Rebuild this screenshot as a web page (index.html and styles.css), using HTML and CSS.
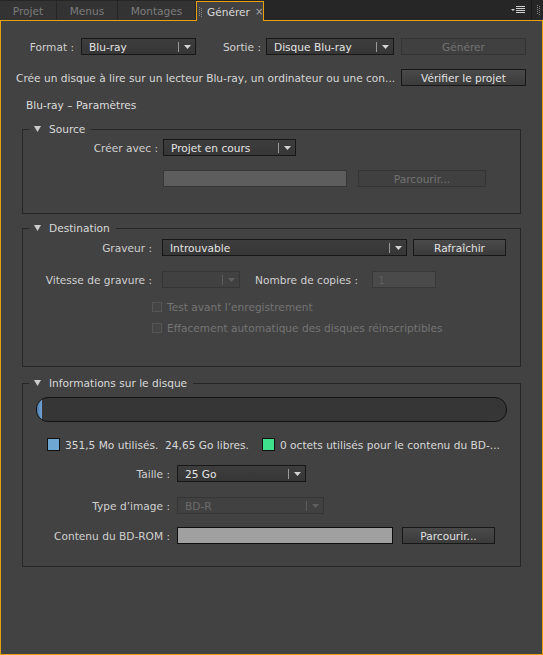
FILE: index.html
```html
<!DOCTYPE html>
<html lang="fr">
<head>
<meta charset="utf-8">
<title>Générer</title>
<link rel="stylesheet" href="styles.css">
</head>
<body>
<div class="tabbar">
  <div class="tab tab-projet">Projet</div>
  <div class="tab tab-menus">Menus</div>
  <div class="tab tab-montages">Montages</div>
  <div class="tab tab-active">
    <svg class="grip" width="3" height="10" viewBox="0 0 3 10"><rect x="0" y="0" width="1" height="1"/><rect x="0" y="2" width="1" height="1"/><rect x="0" y="4" width="1" height="1"/><rect x="0" y="6" width="1" height="1"/><rect x="0" y="8" width="1" height="1"/><rect x="2" y="1" width="1" height="1"/><rect x="2" y="3" width="1" height="1"/><rect x="2" y="5" width="1" height="1"/><rect x="2" y="7" width="1" height="1"/><rect x="2" y="9" width="1" height="1"/></svg>
    <span class="tab-label">Générer</span>
    <span class="tab-close">×</span>
  </div>
  <div class="tab-spacer"></div>
  <svg class="menu-icon" width="14" height="8" viewBox="0 0 14 8"><polygon points="0,3 4,3 2,5"/><rect x="5" y="0" width="9" height="1"/><rect x="5" y="2" width="9" height="1"/><rect x="5" y="4" width="9" height="1"/><rect x="5" y="6" width="9" height="1"/></svg>
  <div class="tab-end">
    <svg class="grip grip-end" width="3" height="10" viewBox="0 0 3 10"><rect x="0" y="0" width="1" height="1"/><rect x="0" y="2" width="1" height="1"/><rect x="0" y="4" width="1" height="1"/><rect x="0" y="6" width="1" height="1"/><rect x="0" y="8" width="1" height="1"/><rect x="2" y="1" width="1" height="1"/><rect x="2" y="3" width="1" height="1"/><rect x="2" y="5" width="1" height="1"/><rect x="2" y="7" width="1" height="1"/><rect x="2" y="9" width="1" height="1"/></svg>
  </div>
</div>

<div class="panel">
  <div class="row row-top">
    <span class="lbl lbl-format">Format :</span>
    <div class="select sel-format"><span class="sel-text">Blu-ray</span><span class="sel-sep"></span><svg class="sel-arrow" width="7" height="4" viewBox="0 0 7 4"><polygon points="0,0 7,0 3.5,4"/></svg></div>
    <span class="lbl lbl-sortie">Sortie :</span>
    <div class="select sel-sortie"><span class="sel-text">Disque Blu-ray</span><span class="sel-sep"></span><svg class="sel-arrow" width="7" height="4" viewBox="0 0 7 4"><polygon points="0,0 7,0 3.5,4"/></svg></div>
    <div class="btn btn-disabled btn-generer">Générer</div>
  </div>

  <div class="row row-desc">
    <span class="desc">Crée un disque à lire sur un lecteur Blu-ray, un ordinateur ou une con...</span>
    <div class="btn btn-verifier">Vérifier le projet</div>
  </div>

  <div class="params-title">Blu-ray – Paramètres</div>

  <section class="group group-source">
    <div class="group-title"><svg class="tri" width="7" height="6" viewBox="0 0 7 6"><polygon points="0,0 7,0 3.5,6"/></svg><span>Source</span></div>
    <div class="row src-row1">
      <span class="lbl lbl-src">Créer avec :</span>
      <div class="select sel-src"><span class="sel-text">Projet en cours</span><span class="sel-sep"></span><svg class="sel-arrow" width="7" height="4" viewBox="0 0 7 4"><polygon points="0,0 7,0 3.5,4"/></svg></div>
    </div>
    <div class="row src-row2">
      <div class="input input-disabled input-src"></div>
      <div class="btn btn-disabled btn-src-browse">Parcourir...</div>
    </div>
  </section>

  <section class="group group-dest">
    <div class="group-title"><svg class="tri" width="7" height="6" viewBox="0 0 7 6"><polygon points="0,0 7,0 3.5,6"/></svg><span>Destination</span></div>
    <div class="row dest-row1">
      <span class="lbl lbl-dest">Graveur :</span>
      <div class="select sel-graveur"><span class="sel-text">Introuvable</span><span class="sel-sep"></span><svg class="sel-arrow" width="7" height="4" viewBox="0 0 7 4"><polygon points="0,0 7,0 3.5,4"/></svg></div>
      <div class="btn btn-refresh">Rafraîchir</div>
    </div>
    <div class="row dest-row2">
      <span class="lbl lbl-dest">Vitesse de gravure :</span>
      <div class="select select-disabled sel-vitesse"><span class="sel-text"></span><span class="sel-sep"></span><svg class="sel-arrow" width="7" height="4" viewBox="0 0 7 4"><polygon points="0,0 7,0 3.5,4"/></svg></div>
      <span class="lbl lbl-copies">Nombre de copies :</span>
      <div class="input input-number">1</div>
    </div>
    <div class="cb-row cb-row1"><span class="checkbox"></span><span>Test avant l’enregistrement</span></div>
    <div class="cb-row cb-row2"><span class="checkbox"></span><span>Effacement automatique des disques réinscriptibles</span></div>
  </section>

  <section class="group group-info">
    <div class="group-title"><svg class="tri" width="7" height="6" viewBox="0 0 7 6"><polygon points="0,0 7,0 3.5,6"/></svg><span>Informations sur le disque</span></div>
    <div class="progress"><div class="progress-fill" style="width:5px"></div></div>
    <div class="legend">
      <span class="swatch swatch-used"></span>
      <span class="legend-text legend-text1">351,5 Mo utilisés.  24,65 Go libres.</span>
      <span class="swatch swatch-rom"></span>
      <span class="legend-text legend-text2">0 octets utilisés pour le contenu du BD-...</span>
    </div>
    <div class="row info-row info-row1">
      <span class="lbl lbl-info">Taille :</span>
      <div class="select sel-taille"><span class="sel-text">25 Go</span><span class="sel-sep"></span><svg class="sel-arrow" width="7" height="4" viewBox="0 0 7 4"><polygon points="0,0 7,0 3.5,4"/></svg></div>
    </div>
    <div class="row info-row info-row2">
      <span class="lbl lbl-info">Type d’image :</span>
      <div class="select select-disabled sel-type"><span class="sel-text">BD-R</span><span class="sel-sep"></span><svg class="sel-arrow" width="7" height="4" viewBox="0 0 7 4"><polygon points="0,0 7,0 3.5,4"/></svg></div>
    </div>
    <div class="row info-row info-row3">
      <span class="lbl lbl-info">Contenu du BD-ROM :</span>
      <div class="input input-rom"></div>
      <div class="btn btn-rom-browse">Parcourir...</div>
    </div>
  </section>
</div>
</body>
</html>
```

FILE: styles.css
```css
* { box-sizing: border-box; }

html, body { margin: 0; padding: 0; }

body {
  width: 543px;
  height: 655px;
  overflow: hidden;
  background: #272727;
  font-family: "DejaVu Sans", "Noto Sans", sans-serif;
  font-size: 10.6px;
  color: #d0d0d0;
}

/* ---------- tab bar ---------- */
.tabbar {
  display: flex;
  height: 20px;
  padding-top: 1px;
  background: #262626;
}

.tab {
  height: 19px;
  display: flex;
  align-items: center;
  justify-content: center;
  margin-right: 1px;
  background: #333333;
  color: #7c7c7c;
  flex: none;
}

.tab-projet { width: 56px; }
.tab-menus { width: 60px; }
.tab-montages { width: 77px; }

.tab-active {
  width: 68px;
  height: 20px;
  margin-bottom: -1px;
  position: relative;
  z-index: 1;
  justify-content: flex-start;
  padding-left: 2px;
  background: #424242;
  color: #dadada;
  border: 1px solid #e7a10c;
  border-bottom: none;
}

.grip { fill: #8a8a8a; flex: none; }

.tab-label { margin-left: 5px; }

.tab-close {
  margin-left: 5px;
  color: #a8a8a8;
  font-size: 10px;
}

.tab-spacer { flex: 1; }

.menu-icon {
  align-self: center;
  fill: #cfcfcf;
  margin-right: 6px;
  margin-top: -1px;
}

.tab-end {
  width: 12px;
  display: flex;
  align-items: center;
  padding-left: 5px;
  border-left: 1px solid #1a1a1a;
  margin-top: -1px;
}

/* ---------- panel ---------- */
.panel {
  height: 635px;
  background: #424242;
  border: 1px solid #e7a10c;
}

.row {
  display: flex;
  align-items: center;
  height: 17px;
}

.lbl {
  flex: none;
  white-space: nowrap;
  text-align: right;
  color: #d0d0d0;
}

/* select */
.select {
  flex: none;
  height: 17px;
  display: flex;
  align-items: center;
  padding: 0 4px 0 7px;
  border: 1px solid #171717;
  background: linear-gradient(#3d3d3d, #363636);
  color: #e4e4e4;
}

.sel-text {
  flex: 1;
  white-space: nowrap;
  overflow: hidden;
}

.sel-sep {
  width: 1px;
  height: 10px;
  background: #9a9a9a;
  margin-right: 5px;
}

.sel-arrow { fill: #d4d4d4; flex: none; }

.select-disabled {
  border-color: #363636;
  background: #414141;
  color: #6c6c6c;
}

.select-disabled .sel-sep { background: #5c5c5c; }
.select-disabled .sel-arrow { fill: #5f5f5f; }

/* buttons */
.btn {
  flex: none;
  height: 17px;
  display: flex;
  align-items: center;
  justify-content: center;
  border: 1px solid #181818;
  background: linear-gradient(#4a4a4a, #3b3b3b);
  color: #e2e2e2;
  white-space: nowrap;
}

.btn-disabled {
  border-color: #343434;
  background: #404040;
  color: #737373;
}

/* inputs */
.input {
  flex: none;
  height: 17px;
}

.input-disabled {
  background: #5d5d5d;
  border: 1px solid #373737;
}

.input-number {
  display: flex;
  align-items: center;
  padding-left: 5px;
  background: #4a4a4a;
  border: 1px solid #383838;
  color: #5e5e5e;
}

.input-rom {
  background: #a0a0a0;
  border: 1px solid #0f0f0f;
}

/* top rows */
.row-top { margin-top: 17px; }
.lbl-format { width: 73px; margin-right: 7px; }
.sel-format { width: 115px; }
.lbl-sortie { width: 65px; margin-right: 5px; }
.sel-sortie { width: 128px; }
.btn-generer { width: 125px; margin-left: 7px; }

.row-desc { margin-top: 14px; }
.desc {
  width: 385px;
  margin-left: 15px;
  white-space: nowrap;
  overflow: hidden;
  color: #d8d8d8;
}
.btn-verifier { width: 125px; }

.params-title {
  margin-top: 12px;
  margin-left: 25px;
  line-height: 14px;
  height: 14px;
  color: #dedede;
}

/* ---------- groups ---------- */
.group {
  margin: 0 21px;
  border: 1px solid #262626;
}

.group-title {
  display: flex;
  align-items: center;
  width: max-content;
  height: 14px;
  line-height: 14px;
  margin: -8px 0 0 6px;
  padding: 0 6px 0 5px;
  background: #424242;
  color: #dadada;
}

.tri { fill: #cccccc; margin-right: 8px; flex: none; }

.group-source { margin-top: 17px; padding-bottom: 26px; }
.src-row1 { margin-top: 3px; }
.lbl-src { width: 135px; margin-right: 5px; }
.sel-src { width: 133px; }
.src-row2 { margin-top: 14px; padding-left: 140px; }
.input-src { width: 184px; }
.btn-src-browse { width: 128px; margin-left: 11px; }

.group-dest { margin-top: 14px; padding-bottom: 31px; }
.dest-row1 { margin-top: 4px; }
.lbl-dest { width: 129px; margin-right: 10px; }
.sel-graveur { width: 245px; }
.btn-refresh { width: 93px; margin-left: 6px; }
.dest-row2 { margin-top: 15px; }
.sel-vitesse { width: 78px; }
.lbl-copies { width: 118px; margin-right: 14px; }
.input-number { width: 64px; }

.cb-row {
  display: flex;
  align-items: center;
  height: 14px;
  padding-left: 129px;
  color: #747474;
  white-space: nowrap;
}
.cb-row1 { margin-top: 12px; }
.cb-row2 { margin-top: 7px; }

.checkbox {
  width: 10px;
  height: 10px;
  margin-right: 5px;
  border: 1px solid #555555;
  background: #454545;
  flex: none;
}

.group-info { margin-top: 16px; padding-bottom: 22px; }

.progress {
  width: 471px;
  height: 25px;
  margin: 7px 0 0 13px;
  border: 1px solid #111111;
  border-radius: 12px;
  background: #363636;
  overflow: hidden;
}

.progress-fill {
  height: 100%;
  background: linear-gradient(to right, #4d7fae, #72a5d3);
}

.legend {
  display: flex;
  align-items: center;
  height: 13px;
  margin-top: 16px;
  padding-left: 24px;
  white-space: pre;
  color: #d8d8d8;
}

.swatch {
  width: 13px;
  height: 13px;
  flex: none;
  border: 1px solid #111111;
  margin-right: 5px;
}
.swatch-used { background: #6fa7d3; }
.swatch-rom { background: #3fe28c; }

.legend-text { overflow: hidden; }
.legend-text1 { width: 197px; }
.legend-text2 { width: 226px; }

.info-row1 { margin-top: 14px; }
.info-row2 { margin-top: 15px; }
.info-row3 { margin-top: 13px; }
.lbl-info { width: 147px; margin-right: 7px; }
.sel-taille { width: 129px; }
.sel-type { width: 147px; }
.input-rom { width: 216px; }
.btn-rom-browse { width: 93px; margin-left: 9px; }
```
